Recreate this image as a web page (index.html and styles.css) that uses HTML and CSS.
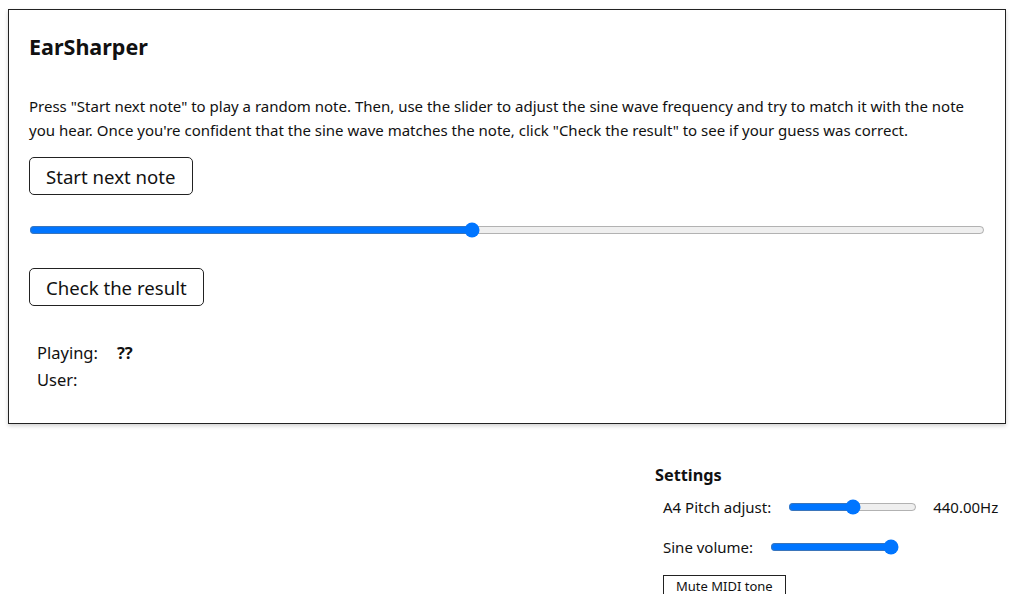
FILE: index.html
```html
<!DOCTYPE html>
<html>
<head>
<meta charset="utf-8">
<link rel="stylesheet" href="styles.css">
</head>
<body>
<div class="card">
  <h2 class="title">EarSharper</h2>
  <p class="intro">Press "Start next note" to play a random note. Then, use the slider to adjust the sine wave frequency and try to match it with the note you hear. Once you're confident that the sine wave matches the note, click "Check the result" to see if your guess was correct.</p>
  <button class="btn">Start next note</button>
  <input class="main-slider" type="range" min="0" max="100" value="46.3" step="0.1">
  <button class="btn">Check the result</button>
  <table class="result">
    <tr><td class="lbl">Playing:</td><td class="val">??</td></tr>
    <tr><td class="lbl">User:</td><td class="val"></td></tr>
  </table>
</div>
<div class="below">
  <div class="settings">
    <h3 class="settings-title">Settings</h3>
    <div class="row">
      <span class="row-label">A4 Pitch adjust:</span>
      <input class="small-slider" type="range" min="0" max="100" value="50">
      <span class="row-value">440.00Hz</span>
    </div>
    <div class="row">
      <span class="row-label">Sine volume:</span>
      <input class="small-slider" type="range" min="0" max="100" value="100">
    </div>
    <button class="mute">Mute MIDI tone</button>
  </div>
</div>
</body>
</html>
```

FILE: styles.css
```css
html, body {
  margin: 0;
  padding: 0;
  background: #fff;
}
body {
  padding: 9px 12px 0 8px;
  font-family: "Noto Sans", "Open Sans", sans-serif;
  color: #111;
}
.card {
  border: 1px solid #222;
  box-shadow: 0 2px 4px rgba(0,0,0,0.18);
  padding: 0 20px 30px 20px;
  display: flex;
  flex-direction: column;
  align-items: flex-start;
}
.title {
  font-size: 21.5px;
  font-weight: 700;
  margin: 22px 0 0 0;
  line-height: 30px;
}
.intro {
  font-size: 15px;
  line-height: 24px;
  margin: 32px 0 15px 0;
}
.btn {
  font-family: inherit;
  font-size: 18.6px;
  color: #111;
  background: #fff;
  border: 1px solid #222;
  border-radius: 5px;
  padding: 0 16px;
  height: 38px;
}
.main-slider {
  width: 956px;
  margin: 27px 0 30px 0;
  accent-color: #0075ff;
}
.result {
  margin: 33px 0 0 8px;
  border-collapse: collapse;
  font-size: 16.5px;
}
.result td {
  padding: 0 8px 0 0;
  height: 27px;
}
.result .lbl { width: 72px; }
.result .val { font-weight: 700; }
.below {
  display: flex;
  justify-content: flex-end;
}
.settings {
  width: 351px;
  font-size: 15px;
  padding-top: 40px;
}
.settings-title {
  font-size: 16.3px;
  font-weight: 700;
  margin: 0 0 7px 0;
}
.row {
  display: flex;
  align-items: center;
  padding-left: 8px;
  height: 28px;
  margin-bottom: 12px;
}
.row-label { margin-right: 17px; }
.small-slider {
  width: 129px;
  margin: 0;
  accent-color: #0075ff;
}
.row-value { margin-left: 16px; }
.mute {
  margin: 2px 0 0 8px;
  font-family: inherit;
  font-size: 13px;
  background: #fff;
  border: 1px solid #222;
  border-radius: 0;
  padding: 1px 12px;
  color: #111;
}
```
